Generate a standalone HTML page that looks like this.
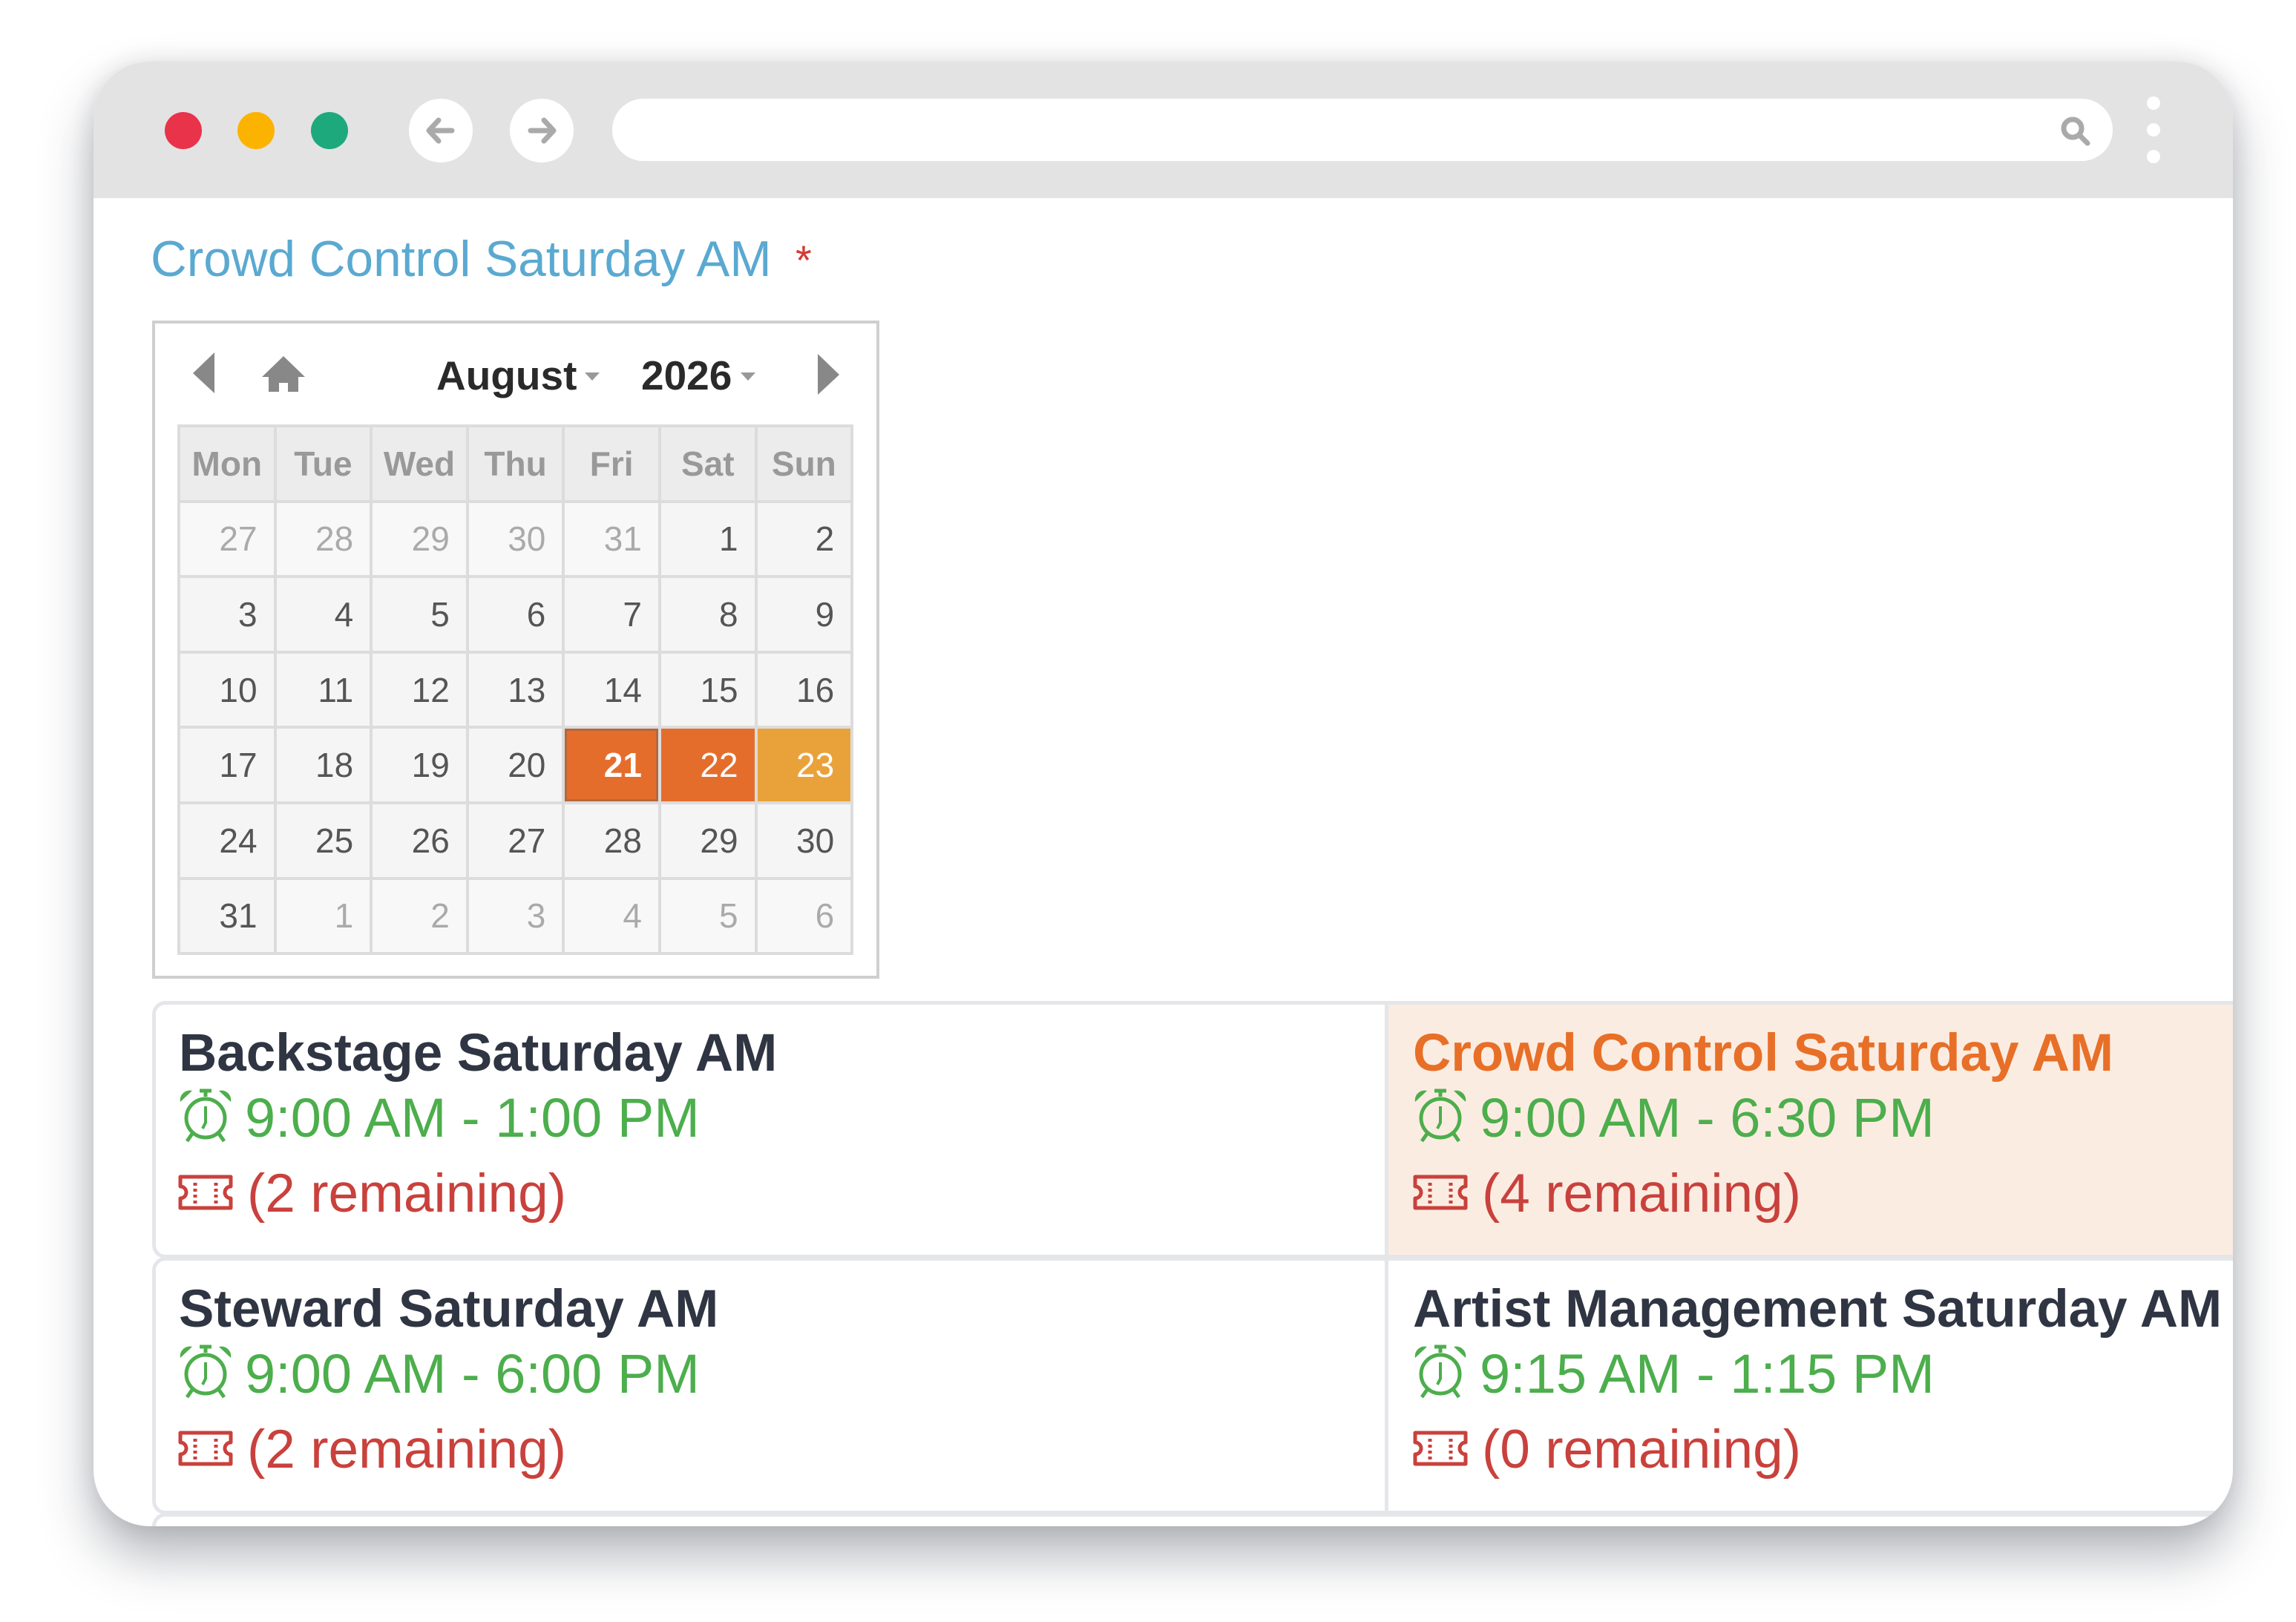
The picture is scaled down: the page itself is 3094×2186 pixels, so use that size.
<!DOCTYPE html>
<html><head><meta charset="utf-8"><style>
*{margin:0;padding:0;box-sizing:border-box}
html,body{width:3094px;height:2186px;background:#fff;overflow:hidden;font-family:"Liberation Sans",Arial,sans-serif}
.win{position:absolute;left:126px;top:83px;width:2883px;height:1974px;border-radius:76px;overflow:hidden;background:#fff;box-shadow:0 40px 70px rgba(40,45,60,.35),0 0 30px rgba(40,45,60,.12)}
.in{position:absolute;left:-126px;top:-83px;width:3094px;height:2186px}
.bar{position:absolute;left:126px;top:83px;width:2883px;height:184px;background:#e3e3e3}
.dot{position:absolute;width:50px;height:50px;border-radius:50%;top:68px}
.nb{position:absolute;top:50px;width:86px;height:86px;border-radius:50%;background:#fff}
.url{position:absolute;left:699px;top:50px;width:2022px;height:84px;border-radius:42px;background:#fff}
.vd{position:absolute;left:2767px;width:18px;height:18px;border-radius:50%;background:#fff}
.abs{position:absolute;white-space:nowrap}
table.cal{position:absolute;left:241px;top:574px;border-collapse:collapse}
table.cal td{width:129.6px;height:101.6px;border:4px solid #dcdcdc;background:#f5f5f5;text-align:right;padding-right:22px;font-size:46px;color:#555}
table.cal tr.h td{background:#ececec;color:#999;font-weight:bold;text-align:center;padding:0;font-size:46px}
table.cal td.o{color:#aaa;background:#f8f8f8}
.card{position:absolute;border:5px solid #e4e6e9}
.t{font-size:71px;font-weight:bold;color:#2f3542}
.tm{font-size:74px;color:#4cae4c}
.rm{font-size:73px;color:#c9413c}
</style></head><body>
<svg width="0" height="0" style="position:absolute"><defs>
<symbol id="clk" viewBox="0 0 76 76"><circle cx="38" cy="42" r="26" fill="none" stroke="#4cae4c" stroke-width="5"/><path d="M38 5V13M30 5H46" stroke="#4cae4c" stroke-width="5"/><path d="M4 20A13 13 0 0 1 20 5Z M72 20A13 13 0 0 0 56 5Z" fill="#4cae4c"/><path d="M38 26V48L34 56" fill="none" stroke="#4cae4c" stroke-width="4"/><path d="M20 63L13 73M56 63L63 73" stroke="#4cae4c" stroke-width="5"/></symbol>
<symbol id="tkt" viewBox="0 0 76 48"><path d="M4 3H72V16A8 8 0 0 0 72 32V45H4V32A8 8 0 0 0 4 16Z" fill="none" stroke="#c9413c" stroke-width="5" stroke-linejoin="round"/><path d="M24 11V39M52 11V39" stroke="#c9413c" stroke-width="5" stroke-dasharray="4 4"/></symbol>
</defs></svg>
<div class="win"><div class="in">
 <div class="bar">
  <div class="dot" style="left:96px;background:#e8334a"></div>
  <div class="dot" style="left:194px;background:#fbb300"></div>
  <div class="dot" style="left:293px;background:#1ea97c"></div>
  <div class="nb" style="left:425px"><svg width="86" height="86" viewBox="0 0 86 86"><path d="M58 43H28M40 29L27 43 40 57" fill="none" stroke="#aaa" stroke-width="7" stroke-linecap="round" stroke-linejoin="round"/></svg></div>
  <div class="nb" style="left:561px"><svg width="86" height="86" viewBox="0 0 86 86"><path d="M28 43H58M46 29L59 43 46 57" fill="none" stroke="#aaa" stroke-width="7" stroke-linecap="round" stroke-linejoin="round"/></svg></div>
  <div class="url"><svg style="position:absolute;left:1948px;top:20px" width="48" height="48" viewBox="0 0 48 48"><circle cx="20" cy="20" r="12" fill="none" stroke="#aaa" stroke-width="7"/><path d="M29 29L40 40" stroke="#aaa" stroke-width="7" stroke-linecap="round"/></svg></div>
  <div class="vd" style="top:47px"></div><div class="vd" style="top:83px"></div><div class="vd" style="top:119px"></div>
 </div>
<div class="abs" style="left:203px;top:311px;font-size:67.5px;color:#5aa9d1">Crowd Control Saturday AM</div>
<div class="abs" style="left:1072px;top:318px;font-size:56px;color:#d43a32">*</div>
<div class="abs" style="left:205px;top:432px;width:980px;height:887px;border:4px solid #cfcfcf;background:#fff"></div>
<svg class="abs" style="left:255px;top:470px" width="170" height="65" viewBox="0 0 170 65"><path d="M34 5V60L5 33Z" fill="#888"/><path d="M127 10L98 38H107V58H121V46H133V58H147V38H156Z" fill="#888"/></svg>
<div class="abs" style="left:588px;top:474px;font-size:55px;font-weight:bold;color:#2a2a2a">August</div>
<svg class="abs" style="left:788px;top:502px" width="20" height="12"><path d="M0 0H20L10 11Z" fill="#999"/></svg>
<div class="abs" style="left:864px;top:474px;font-size:55px;font-weight:bold;color:#2a2a2a">2026</div>
<svg class="abs" style="left:998px;top:502px" width="20" height="12"><path d="M0 0H20L10 11Z" fill="#999"/></svg>
<svg class="abs" style="left:1098px;top:475px" width="40" height="60"><path d="M4 2V57L33 30Z" fill="#888"/></svg>
<table class="cal" style="top:572px;left:239px">
<tr class="h"><td>Mon</td><td>Tue</td><td>Wed</td><td>Thu</td><td>Fri</td><td>Sat</td><td>Sun</td></tr>
<tr><td class="o">27</td><td class="o">28</td><td class="o">29</td><td class="o">30</td><td class="o">31</td><td>1</td><td>2</td></tr>
<tr><td>3</td><td>4</td><td>5</td><td>6</td><td>7</td><td>8</td><td>9</td></tr>
<tr><td>10</td><td>11</td><td>12</td><td>13</td><td>14</td><td>15</td><td>16</td></tr>
<tr><td>17</td><td>18</td><td>19</td><td>20</td><td style="background:#e56d2c;color:#fff;font-weight:bold;box-shadow:inset 0 0 0 3px #b5673c">21</td><td style="background:#e56d2c;color:#fff">22</td><td style="background:#e9a23a;color:#fff">23</td></tr>
<tr><td>24</td><td>25</td><td>26</td><td>27</td><td>28</td><td>29</td><td>30</td></tr>
<tr><td>31</td><td class="o">1</td><td class="o">2</td><td class="o">3</td><td class="o">4</td><td class="o">5</td><td class="o">6</td></tr>
</table>

<div class="card" style="left:205px;top:1349px;width:1666px;height:347px;border-radius:18px 0 0 18px"></div>
<div class="card" style="left:1866px;top:1349px;width:1160px;height:347px;background:#fbece2"></div>
<div class="card" style="left:205px;top:1694px;width:1666px;height:347px;border-radius:18px 0 0 18px"></div>
<div class="card" style="left:1866px;top:1694px;width:1160px;height:347px"></div>
<div class="card" style="left:205px;top:2039px;width:2821px;height:100px;border-radius:18px 0 0 0"></div>

<div class="abs t" style="left:241px;top:1379px">Backstage Saturday AM</div>
<svg class="abs" style="left:239px;top:1465px" width="76" height="76"><use href="#clk"/></svg>
<div class="abs tm" style="left:330px;top:1464px">9:00 AM - 1:00 PM</div>
<svg class="abs" style="left:239px;top:1583px" width="76" height="48"><use href="#tkt"/></svg>
<div class="abs rm" style="left:333px;top:1567px">(2 remaining)</div>

<div class="abs t" style="left:1904px;top:1379px;color:#e86f27">Crowd Control Saturday AM</div>
<svg class="abs" style="left:1903px;top:1465px" width="76" height="76"><use href="#clk"/></svg>
<div class="abs tm" style="left:1994px;top:1464px">9:00 AM - 6:30 PM</div>
<svg class="abs" style="left:1903px;top:1583px" width="76" height="48"><use href="#tkt"/></svg>
<div class="abs rm" style="left:1997px;top:1567px">(4 remaining)</div>

<div class="abs t" style="left:241px;top:1724px">Steward Saturday AM</div>
<svg class="abs" style="left:239px;top:1810px" width="76" height="76"><use href="#clk"/></svg>
<div class="abs tm" style="left:330px;top:1809px">9:00 AM - 6:00 PM</div>
<svg class="abs" style="left:239px;top:1928px" width="76" height="48"><use href="#tkt"/></svg>
<div class="abs rm" style="left:333px;top:1912px">(2 remaining)</div>

<div class="abs t" style="left:1904px;top:1724px">Artist Management Saturday AM</div>
<svg class="abs" style="left:1903px;top:1810px" width="76" height="76"><use href="#clk"/></svg>
<div class="abs tm" style="left:1994px;top:1809px">9:15 AM - 1:15 PM</div>
<svg class="abs" style="left:1903px;top:1928px" width="76" height="48"><use href="#tkt"/></svg>
<div class="abs rm" style="left:1997px;top:1912px">(0 remaining)</div>
</div></div>
</body></html>
